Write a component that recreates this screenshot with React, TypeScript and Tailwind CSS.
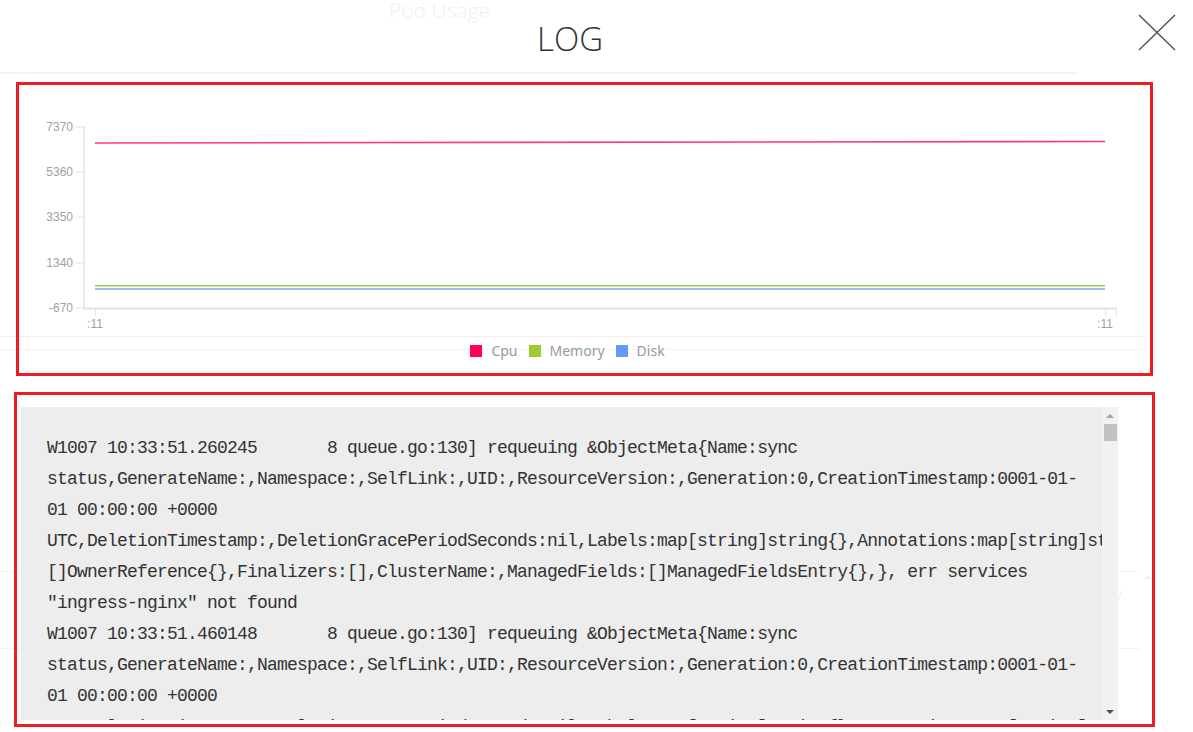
import React from "react";

const logLines = [
  "W1007 10:33:51.260245       8 queue.go:130] requeuing &ObjectMeta{Name:sync",
  "status,GenerateName:,Namespace:,SelfLink:,UID:,ResourceVersion:,Generation:0,CreationTimestamp:0001-01-",
  "01 00:00:00 +0000",
  "UTC,DeletionTimestamp:,DeletionGracePeriodSeconds:nil,Labels:map[string]string{},Annotations:map[string]string{},OwnerReferences:",
  "[]OwnerReference{},Finalizers:[],ClusterName:,ManagedFields:[]ManagedFieldsEntry{},}, err services",
  "\"ingress-nginx\" not found",
  "W1007 10:33:51.460148       8 queue.go:130] requeuing &ObjectMeta{Name:sync",
  "status,GenerateName:,Namespace:,SelfLink:,UID:,ResourceVersion:,Generation:0,CreationTimestamp:0001-01-",
  "01 00:00:00 +0000",
  "UTC,DeletionTimestamp:,DeletionGracePeriodSeconds:nil,Labels:map[string]string{},Annotations:map[string]string{},OwnerReferences:",
];

const yTicks = [
  { label: "7370", y: 127 },
  { label: "5360", y: 172 },
  { label: "3350", y: 217 },
  { label: "1340", y: 263 },
  { label: "-670", y: 308 },
];

function Chart() {
  return (
    <svg width={1131} height={255} viewBox="19 85 1131 255" className="block">
      <line x1={84} y1={126} x2={84} y2={310} stroke="#e3e3e3" strokeWidth={1.5} />
      {yTicks.map((t) => (
        <g key={t.label}>
          <line x1={76} y1={t.y} x2={84} y2={t.y} stroke="#e3e3e3" strokeWidth={1} />
          <text
            x={73}
            y={t.y + 4}
            textAnchor="end"
            fontSize={12}
            fill="#a0a0a0"
            fontFamily="'Liberation Sans', Arial, sans-serif"
          >
            {t.label}
          </text>
        </g>
      ))}
      <line x1={84} y1={308.5} x2={1117} y2={308.5} stroke="#e3e3e3" strokeWidth={2} />
      <line x1={95.5} y1={308} x2={95.5} y2={316} stroke="#e3e3e3" strokeWidth={1} />
      <line x1={1105.5} y1={308} x2={1105.5} y2={316} stroke="#e3e3e3" strokeWidth={1} />
      <line x1={1116.5} y1={308} x2={1116.5} y2={316} stroke="#e3e3e3" strokeWidth={1} />
      <text x={95} y={328} textAnchor="middle" fontSize={12} fill="#a0a0a0" fontFamily="'Liberation Sans', Arial, sans-serif">
        :11
      </text>
      <text x={1105} y={328} textAnchor="middle" fontSize={12} fill="#a0a0a0" fontFamily="'Liberation Sans', Arial, sans-serif">
        :11
      </text>
      <line x1={95} y1={143} x2={1105} y2={141.5} stroke="#ff3a70" strokeWidth={1.6} />
      <line x1={95} y1={285.8} x2={1105} y2={285.8} stroke="#9bc94a" strokeWidth={1.6} />
      <line x1={95} y1={289} x2={1105} y2={289} stroke="#7aa6f2" strokeWidth={1.6} />
    </svg>
  );
}

function LegendItem({ color, label }: { color: string; label: string }) {
  return (
    <div className="flex items-center gap-[9px]">
      <span className={`block w-[12px] h-[12px] ${color}`} />
      <span className="text-[14px] text-[#9a9a9a] leading-[22px]">{label}</span>
    </div>
  );
}

export default function App() {
  return (
    <div
      className="relative w-[1193px] h-[732px] bg-white overflow-hidden"
      style={{ fontFamily: "'Noto Sans', 'Open Sans', sans-serif" }}
    >
      {/* faint background page behind the modal */}
      <div className="absolute inset-0 pointer-events-none">
        <div
          className="absolute left-[389px] top-[-5px] text-[21px] font-light text-[#eef0f4] whitespace-nowrap"
          style={{ fontFamily: "'Open Sans', sans-serif" }}
        >
          Pod Usage
        </div>
        <div className="absolute left-0 top-[336px] w-[1143px] h-px bg-[#ffe5ec]" />
        <div className="absolute left-0 top-[349px] w-[1143px] h-px bg-[#f6f6ee]" />
        <div className="absolute left-0 top-[571px] w-[1140px] h-px bg-[#f3f3f3]" />
        <div className="absolute left-0 top-[648px] w-[1140px] h-px bg-[#f3f3f3]" />
        <div className="absolute left-[1144px] top-[575px] w-0 h-0 border-l-[4px] border-r-[4px] border-b-[4px] border-l-transparent border-r-transparent border-b-[#eeeeee]" />
        <div className="absolute left-[1118px] top-[590px] w-px h-[18px] bg-[#efefef] rotate-[20deg]" />
      </div>

      <div className="relative">
        {/* header */}
        <div className="relative h-[72px] flex justify-center pr-[53px] pt-[16px]">
          <div
            className="text-[33px] leading-[46px] font-light text-[#333333]"
            style={{ fontFamily: "'Open Sans', sans-serif" }}
          >
            LOG
          </div>
          <button className="absolute left-[1138px] top-[14px] w-[38px] h-[37px]" aria-label="close">
            <svg width={38} height={37} viewBox="0 0 38 37">
              <line x1={1} y1={1} x2={37} y2={36} stroke="#555555" strokeWidth={1.5} />
              <line x1={37} y1={1} x2={1} y2={36} stroke="#555555" strokeWidth={1.5} />
            </svg>
          </button>
        </div>
        <div className="h-[2px] w-[1078px] bg-[#f1f4fb]" />

        {/* chart box */}
        <div className="mt-[8px] ml-[16px] w-[1137px] h-[294px] border-[3px] border-[#ed1c24] flex flex-col">
          <Chart />
          <div className="flex justify-center items-center gap-[11px] pr-[34px] h-[22px]">
            <LegendItem color="bg-[#ff0055]" label="Cpu" />
            <LegendItem color="bg-[#9acd32]" label="Memory" />
            <LegendItem color="bg-[#6699ff]" label="Disk" />
          </div>
        </div>

        {/* log box */}
        <div className="mt-[16px] ml-[14px] w-[1141px] h-[335px] border-[3px] border-[#ed1c24] pt-[12px] pl-[4px] pr-[34px] pb-[4px]">
          <div className="flex h-full bg-[#ededed]">
            <div
              className="flex-1 overflow-hidden pl-[26px] pt-[26px] text-[18px] tracking-[-0.8px] leading-[31px] text-[#333333] whitespace-pre"
              style={{ fontFamily: "'Liberation Mono', 'DejaVu Sans Mono', monospace" }}
            >
              {logLines.map((l, i) => (
                <div key={i}>{l}</div>
              ))}
            </div>
            <div className="w-[16px] bg-[#f1f1f1] flex flex-col items-center">
              <div className="h-[17px] flex items-center justify-center">
                <div className="w-0 h-0 border-l-[4px] border-r-[4px] border-b-[4px] border-l-transparent border-r-transparent border-b-[#a3a3a3]" />
              </div>
              <div className="w-[13px] h-[17px] bg-[#c1c1c1]" />
              <div className="flex-1" />
              <div className="h-[17px] flex items-center justify-center">
                <div className="w-0 h-0 border-l-[4px] border-r-[4px] border-t-[4px] border-l-transparent border-r-transparent border-t-[#505050]" />
              </div>
            </div>
          </div>
        </div>
      </div>
    </div>
  );
}
